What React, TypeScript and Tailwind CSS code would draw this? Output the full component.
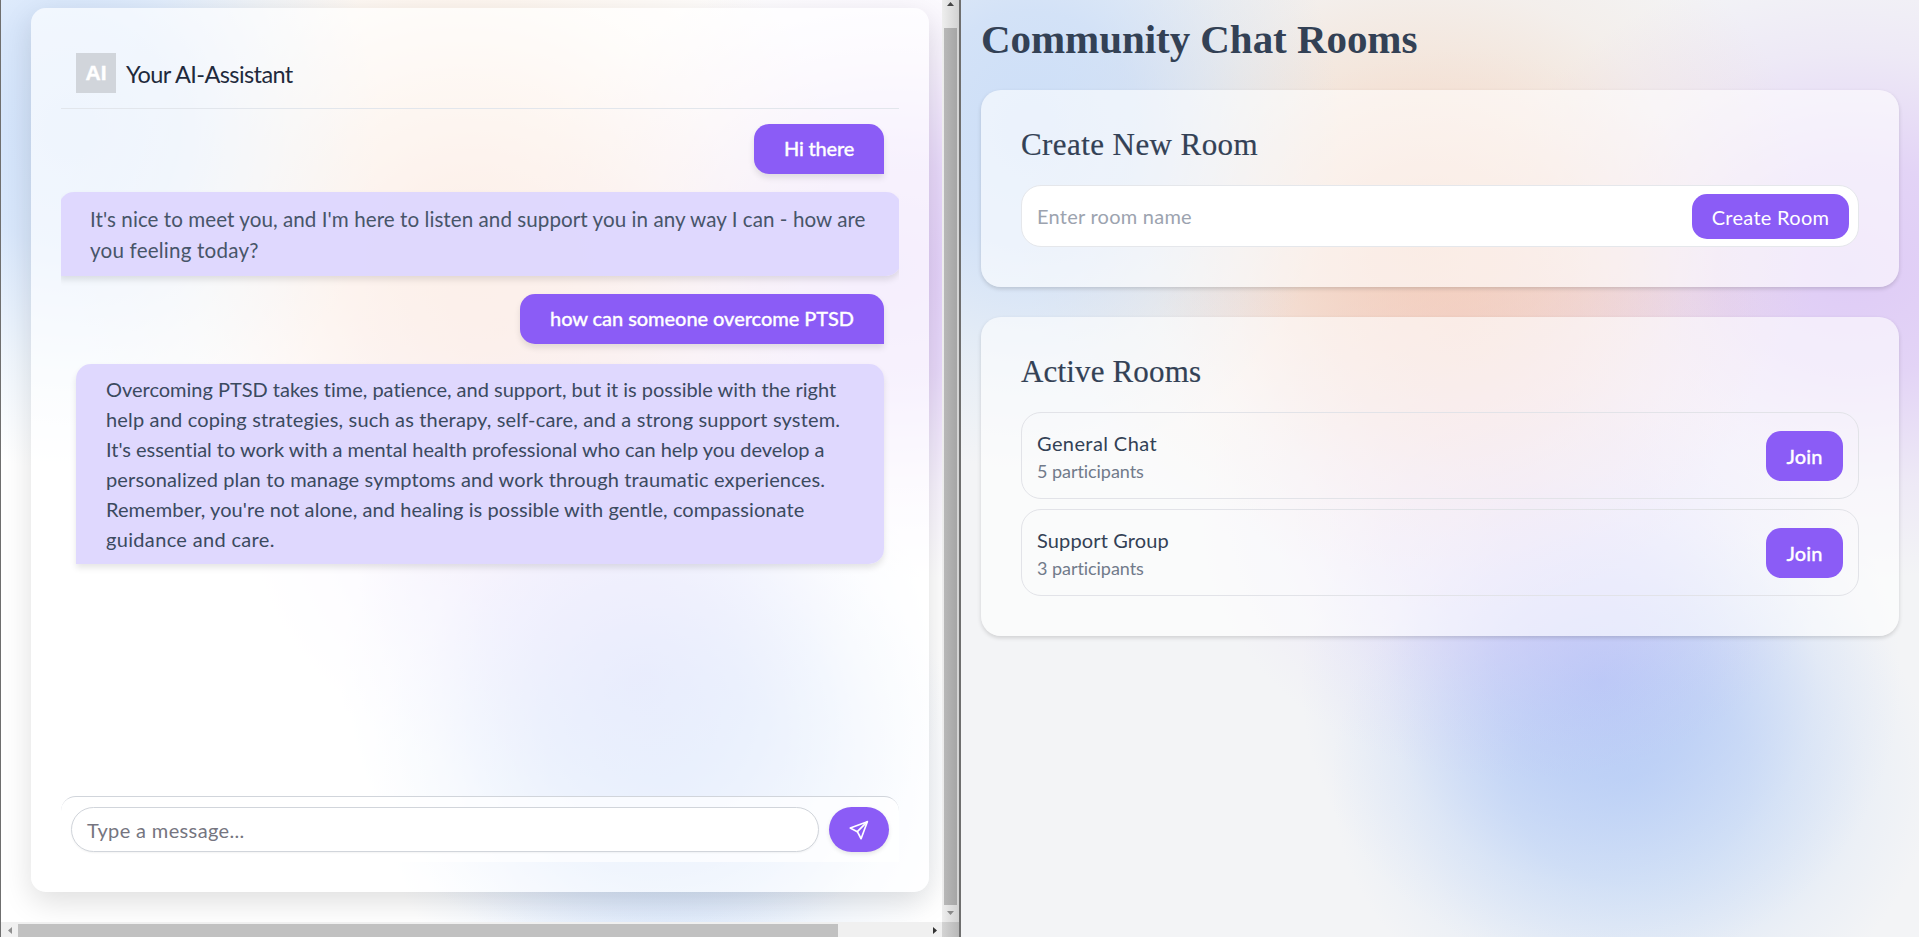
import type { ReactNode } from "react";

const AURORA =
  "bg-[radial-gradient(310px_340px_at_70px_130px,rgba(186,212,248,0.68)_0%,rgba(186,212,248,0.56)_35%,rgba(190,216,244,0.24)_70%,rgba(190,216,244,0)_100%),radial-gradient(400px_350px_at_460px_230px,rgba(244,196,164,0.6)_0%,rgba(245,202,168,0.44)_35%,rgba(246,212,182,0.17)_70%,rgba(248,216,190,0)_100%),radial-gradient(300px_280px_at_500px_330px,rgba(240,184,190,0.45)_0%,rgba(240,188,196,0.32)_40%,rgba(240,190,210,0.1)_75%,rgba(240,190,210,0)_100%),radial-gradient(380px_310px_at_890px_270px,rgba(212,182,246,0.66)_0%,rgba(212,182,246,0.52)_35%,rgba(216,190,246,0.2)_70%,rgba(216,190,246,0)_100%),radial-gradient(320px_260px_at_560px_520px,rgba(212,190,250,0.45)_0%,rgba(212,190,250,0.33)_40%,rgba(212,190,250,0.1)_75%,rgba(212,190,250,0)_100%),radial-gradient(300px_290px_at_640px_680px,rgba(170,190,246,0.68)_0%,rgba(172,194,246,0.5)_35%,rgba(180,202,246,0.17)_72%,rgba(184,206,246,0)_100%),radial-gradient(300px_260px_at_670px_780px,rgba(176,206,246,0.55)_0%,rgba(176,206,246,0.41)_40%,rgba(180,208,246,0.12)_78%,rgba(180,208,246,0)_100%)]";

function UserBubble({ width, children }: { width: string; children: ReactNode }) {
  return (
    <div
      className={`${width} h-[50px] shrink-0 self-end rounded-[15px] rounded-br-none bg-[#8b5cf6] pl-[30px] text-[20px] leading-[49px] font-medium whitespace-nowrap text-white shadow-[0_4px_6px_rgba(0,0,0,0.1)] [-webkit-text-stroke:0.3px_white]`}
    >
      {children}
    </div>
  );
}

function AssistantPanel() {
  return (
    <section className="flex h-[937px] w-[961px] shrink-0 flex-col border-r-2 border-l border-[#6f6f6f]">
      <div className="flex h-[922px]">
        <div className={`h-[922px] w-[941px] bg-white pt-2 pl-[30px] ${AURORA}`}>
          <div className="flex h-[884px] w-[898px] flex-col rounded-[15px] bg-white/65 px-[30px] shadow-[0_10px_30px_rgba(0,0,0,0.13)]">
            <header className="mt-[30px] flex h-[71px] shrink-0 items-start gap-[10px] border-b border-[#e2e6ec] pt-[15px] pl-[15px]">
              <div className="flex h-10 w-10 items-center justify-center bg-[#d1d5db] font-['Liberation_Sans',sans-serif] text-[21px] leading-10 font-bold text-white [-webkit-text-stroke:0.4px_white]">
                AI
              </div>
              <h1 className="text-[23.5px] leading-[42px] tracking-[-0.58px] text-[#1f2a3c]">Your AI-Assistant</h1>
            </header>
            <div className="flex h-[687px] shrink-0 flex-col overflow-hidden pt-[15px]">
              <div className="flex flex-col px-[15px]">
                <UserBubble width="w-[130px]">
                  <span className="tracking-[-0.2px]">Hi there</span>
                </UserBubble>
              </div>
              <div className="-mx-[2px] mt-[18px] h-[84px] shrink-0 rounded-[15px] rounded-bl-none bg-[#ddd6fe]/95 pt-[12px] pl-[31px] text-[20.6px] leading-[31px] whitespace-nowrap text-[#475569] shadow-[0_4px_6px_rgba(0,0,0,0.1)]">
                <p className="tracking-[0.055px]">
                  It's nice to meet you, and I'm here to listen and support you in any way I can - how are
                </p>
                <p className="tracking-[0.2px]">you feeling today?</p>
              </div>
              <div className="mt-[18px] flex flex-col px-[15px]">
                <UserBubble width="w-[364px]">
                  <span className="tracking-[-0.06px]">how can someone overcome PTSD</span>
                </UserBubble>
                <div className="mt-5 h-[200px] rounded-[15px] rounded-bl-none bg-[#ddd6fe]/95 pt-[10px] pl-[30px] text-[20px] leading-[30px] whitespace-nowrap text-[#3b4a5f] shadow-[0_4px_6px_rgba(0,0,0,0.1)]">
                  <p className="tracking-[-0.01px]">
                    Overcoming PTSD takes time, patience, and support, but it is possible with the right
                  </p>
                  <p className="tracking-[0.16px]">
                    help and coping strategies, such as therapy, self-care, and a strong support system.
                  </p>
                  <p className="tracking-[-0.035px]">
                    It's essential to work with a mental health professional who can help you develop a
                  </p>
                  <p className="tracking-[0.147px]">
                    personalized plan to manage symptoms and work through traumatic experiences.
                  </p>
                  <p className="tracking-[0.075px]">
                    Remember, you're not alone, and healing is possible with gentle, compassionate
                  </p>
                  <p className="tracking-[0.33px]">guidance and care.</p>
                </div>
              </div>
            </div>
            <div className="flex h-[66px] shrink-0 gap-[10px] rounded-t-[15px] border-t border-[#d1d5db] bg-white/70 px-[10px] pt-[10px]">
              <div className="h-[45px] w-[748px] rounded-full border border-[#d1d5db] bg-white pl-[15px] text-[20px] leading-[45px] tracking-[0.36px] text-[#757580] shadow-[0_1px_2px_rgba(0,0,0,0.05)]">
                Type a message...
              </div>
              <button className="flex h-[45px] w-[60px] items-center justify-center rounded-full bg-[#8b5cf6] shadow-[0_2px_4px_rgba(0,0,0,0.1)]">
                <svg
                  width="20"
                  height="20"
                  viewBox="0 0 24 24"
                  fill="none"
                  stroke="white"
                  strokeWidth="2"
                  strokeLinecap="round"
                  strokeLinejoin="round"
                >
                  <path d="M22 2 1.5 9.5 10 14l4.500 8.500z" />
                  <path d="M22 2 10 14" />
                </svg>
              </button>
            </div>
          </div>
        </div>
        <div className="flex w-[17px] flex-col items-center bg-linear-to-r from-[#eeeeee] to-[#d2d2d2]">
          <div className="flex h-7 items-start pt-[2px]">
            <svg width="7" height="4" viewBox="0 0 7 4">
              <path d="M0 4h7L3.500 0z" fill="#444" />
            </svg>
          </div>
          <div className="h-[877px] w-[13px] bg-linear-to-r from-[#b8b8b8] to-[#a6a6a6]" />
          <svg className="mt-[6px]" width="7" height="4" viewBox="0 0 7 4">
            <path d="M0 0h7L3.500 4z" fill="#8a8a8a" />
          </svg>
        </div>
      </div>
      <div className="flex h-[15px] bg-[#f0f0f0]">
        <div className="flex h-[15px] w-[17px] items-center justify-center pt-[2px]">
          <svg width="4" height="7" viewBox="0 0 4 7">
            <path d="M4 0v7L0 3.500z" fill="#8f8f8f" />
          </svg>
        </div>
        <div className="mt-[2px] h-[13px] w-[820px] bg-[#c1c1c1]" />
        <div className="flex flex-1 items-center justify-end pt-[2px] pr-[5px]">
          <svg width="4" height="7" viewBox="0 0 4 7">
            <path d="M0 0v7l4-3.500z" fill="#333" />
          </svg>
        </div>
        <div className="w-[17px] bg-linear-to-r from-[#d4d4d4] to-[#b8b8b8]" />
      </div>
    </section>
  );
}

function RoomRow({ name, participants, tracking }: { name: string; participants: number; tracking: string }) {
  return (
    <li className="flex h-[87px] items-center justify-between rounded-[20px] border border-[#e2e3e8] px-[15px]">
      <div className="pt-[1px]">
        <p className={`${tracking} text-[20px] leading-[30px] text-[#334155]`}>{name}</p>
        <p className="text-[18px] leading-[26px] tracking-[-0.05px] text-[#717a8a]">{participants} participants</p>
      </div>
      <button className="h-[50px] w-[77px] rounded-[15px] bg-[#8b5cf6] text-[20px] leading-[50px] font-medium tracking-[0.14px] text-white [-webkit-text-stroke:0.3px_white]">
        Join
      </button>
    </li>
  );
}

function RoomsPanel() {
  return (
    <main className={`h-[937px] flex-1 bg-[#f3f4f6] px-5 pt-[15px] ${AURORA}`}>
      <h1 className="h-[75px] font-['Liberation_Serif',serif] text-[41px] leading-[49px] font-bold tracking-[-0.05px] text-[#334155]">
        Community Chat Rooms
      </h1>
      <section className="h-[197px] rounded-[20px] bg-white/60 px-10 pt-[33px] shadow-[0_2px_4px_rgba(0,0,0,0.15)]">
        <h2 className="h-[62px] font-['Liberation_Serif',serif] text-[31px] leading-[44px] tracking-[0.42px] text-[#334155] [-webkit-text-stroke:0.2px_#334155]">
          Create New Room
        </h2>
        <div className="flex h-[62px] items-center justify-between rounded-[20px] border border-[#e5e7eb] bg-white pr-[9px] pl-[15px]">
          <span className="text-[20px] tracking-[0.25px] text-[#9ca3af]">Enter room name</span>
          <button className="mt-[1px] h-[45px] w-[157px] rounded-[15px] bg-[#8b5cf6] text-[20px] leading-[46px] tracking-[0.3px] text-white">
            Create Room
          </button>
        </div>
      </section>
      <section className="mt-[30px] h-[319px] rounded-[20px] bg-white/60 px-10 pt-[33px] shadow-[0_2px_4px_rgba(0,0,0,0.15)]">
        <h2 className="h-[62px] font-['Liberation_Serif',serif] text-[31px] leading-[44px] tracking-[0.16px] text-[#334155] [-webkit-text-stroke:0.2px_#334155]">
          Active Rooms
        </h2>
        <ul className="flex flex-col gap-[10px]">
          <RoomRow name="General Chat" participants={5} tracking="tracking-[0.4px]" />
          <RoomRow name="Support Group" participants={3} tracking="tracking-[0.14px]" />
        </ul>
      </section>
    </main>
  );
}

export default function App() {
  return (
    <div className="flex h-[937px] w-full overflow-hidden font-[Lato,sans-serif]">
      <AssistantPanel />
      <RoomsPanel />
    </div>
  );
}
